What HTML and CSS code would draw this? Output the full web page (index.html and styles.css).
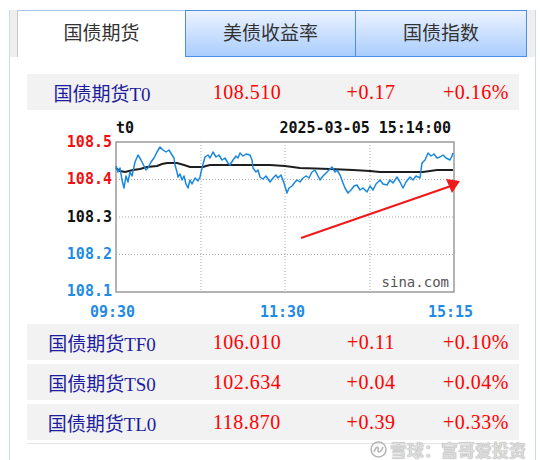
FILE: index.html
```html
<!DOCTYPE html>
<html lang="zh-CN">
<head>
  <meta charset="UTF-8">
  <title>国债期货</title>
  <link rel="stylesheet" href="styles.css">
</head>
<body>
  <div class="panel">
    <div class="tabs">
      <div class="tab-edge"></div>
      <div class="tab active">国债期货</div>
      <div class="tab">美债收益率</div>
      <div class="tab last">国债指数</div>
      <div class="tab-edge right"></div>
    </div>

    <div class="content">
      <div class="row">
        <span class="name">国债期货T0</span>
        <span class="price">108.510</span>
        <span class="chg">+0.17</span>
        <span class="pct">+0.16%</span>
      </div>

      <div class="chart">
        <svg width="492" height="214" viewBox="27 110 492 214">
          <!-- grid -->
          <g class="grid">
            <line x1="116" y1="179.5" x2="454" y2="179.5"/>
            <line x1="116" y1="217" x2="454" y2="217"/>
            <line x1="116" y1="254.5" x2="454" y2="254.5"/>
            <line x1="201" y1="142" x2="201" y2="292"/>
            <line x1="285" y1="142" x2="285" y2="292"/>
            <line x1="370" y1="142" x2="370" y2="292"/>
          </g>
          <rect class="frame" x="116" y="142" width="338" height="150"/>

          <!-- average -->
          <polyline class="avg" points="116,168 120,171 125,172 129,171 133,170 140,169 147,167 157,166 162,164 167,163 177,163 184,165 190,167 203,167 206,166 210,165 240,165 270,165 285,166 300,168 330,169 353,170 370,171 380,172 400,172 423,172 430,171 437,170 453,170"/>

          <!-- price -->
          <polyline class="px" points="116,166 118,172 120,168 122,180 124,188 126,176 128,182 130,172 132,176 135,162 138,155 141,160 143,164 146,170 148,168 151,162 154,158 157,152 160,147 163,150 166,152 169,150 172,155 174,158 175,165 177,172 178,177 180,174 182,180 184,176 186,184 188,188 190,180 192,184 195,178 198,181 200,177 202,168 205,157 208,155 210,158 213,152 216,157 219,155 222,160 225,158 228,163 230,165 233,160 236,156 238,158 240,153 243,156 246,154 250,155 252,160 253,168 256,172 258,170 260,177 263,179 266,176 270,182 273,178 276,175 278,178 281,175 284,183 287,193 289,188 292,186 295,182 297,180 300,182 303,178 306,176 309,178 312,172 315,170 318,176 320,180 323,176 326,173 329,170 332,167 335,172 337,170 340,175 343,183 345,188 348,193 351,190 354,186 357,185 360,190 363,188 367,192 370,186 373,190 376,184 380,180 383,184 387,185 390,180 393,183 397,177 400,182 403,188 406,182 410,177 413,180 416,176 420,178 422,163 425,160 428,153 431,156 434,154 437,158 440,157 443,155 446,158 450,160 452,156 453,153"/>

          <!-- labels -->
          <text class="lbl" x="116" y="133">t0</text>
          <text class="lbl" x="451" y="133" text-anchor="end">2025-03-05 15:14:00</text>
          <text class="lbl up" x="112" y="147" text-anchor="end">108.5</text>
          <text class="lbl up" x="112" y="184" text-anchor="end">108.4</text>
          <text class="lbl" x="112" y="222" text-anchor="end">108.3</text>
          <text class="lbl down" x="112" y="259" text-anchor="end">108.2</text>
          <text class="lbl down" x="112" y="296" text-anchor="end">108.1</text>
          <text class="lbl down" x="90" y="317">09:30</text>
          <text class="lbl down" x="260" y="317">11:30</text>
          <text class="lbl down" x="428" y="317">15:15</text>
          <text class="brand" x="449" y="287" text-anchor="end">sina.com</text>

          <!-- arrow -->
          <line class="arrow" x1="301" y1="238" x2="451" y2="186"/>
          <polygon class="arrow-head" points="446,179 460,181 452,193"/>
        </svg>
      </div>

      <div class="row">
        <span class="name">国债期货TF0</span>
        <span class="price">106.010</span>
        <span class="chg">+0.11</span>
        <span class="pct">+0.10%</span>
      </div>
      <div class="row">
        <span class="name">国债期货TS0</span>
        <span class="price">102.634</span>
        <span class="chg">+0.04</span>
        <span class="pct">+0.04%</span>
      </div>
      <div class="row">
        <span class="name">国债期货TL0</span>
        <span class="price">118.870</span>
        <span class="chg">+0.39</span>
        <span class="pct">+0.33%</span>
      </div>
      <div class="rule"></div>
    </div>

    <div class="watermark">
      <svg width="17" height="17" viewBox="0 0 17 17">
        <circle cx="8.5" cy="8.5" r="7.5"/>
        <path d="M4 11 C6 5, 9 5, 8 9 C7 12, 11 12, 13 6"/>
      </svg>
      <span>雪球：富哥爱投资</span>
    </div>
  </div>
</body>
</html>
```

FILE: styles.css
```css
body {
  margin: 0;
  background: #fff;
  font-family: "Liberation Serif", "Noto Sans CJK SC", serif;
}

.panel {
  position: relative;
  box-sizing: border-box;
  width: 527px;
  height: 450px;
  margin: 10px 0 0 9px;
  border-left: 1px solid #c9d9ef;
  border-right: 1px solid #c9d9ef;
}

/* tabs */
.tabs {
  display: flex;
  height: 47px;
}
.tab-edge {
  width: 7px;
  background: #efefef;
  border-right: 1px solid #c8c8c8;
}
.tab-edge.right {
  width: 8px;
  border-right: none;
}
.tab {
  box-sizing: border-box;
  width: 170px;
  border: 1px solid #4b8fe6;
  border-right: none;
  background: linear-gradient(#ecf3ff, #aacdfd);
  color: #333;
  font-size: 19px;
  line-height: 45px;
  text-align: center;
}
.tab.active {
  width: 167px;
  border: none;
  border-top: 1px solid #a9c6ea;
  background: #fff;
}
.tab.last {
  width: 172px;
  border-right: 1px solid #4b8fe6;
}

/* quote rows */
.content {
  padding: 17px 16px 0 17px;
}
.row {
  display: grid;
  grid-template-columns: 150px 140px 108px 94px;
  align-items: center;
  height: 36px;
  background: #f2f2f2;
}
.row + .row {
  margin-top: 4px;
}
.name {
  text-align: center;
  color: #1c1c9e;
  font-size: 19px;
}
.price, .chg, .pct {
  color: #ff0000;
  font-size: 20px;
  letter-spacing: 0.5px;
}
.price, .chg {
  text-align: center;
}
.pct {
  text-align: right;
  padding-right: 10px;
}
.rule {
  height: 1px;
  margin-top: 3px;
  background: #e6e6e6;
}

/* chart */
.chart svg {
  display: block;
}
.grid line {
  stroke: #aaa;
  stroke-width: 1;
  stroke-dasharray: 1 2;
}
.frame {
  fill: none;
  stroke: #9a9a9a;
  stroke-width: 1.5;
}
.avg {
  fill: none;
  stroke: #1e1e1e;
  stroke-width: 2;
}
.px {
  fill: none;
  stroke: #1a87df;
  stroke-width: 1.5;
  stroke-linejoin: round;
}
.lbl {
  font-family: "DejaVu Sans Mono", monospace;
  font-size: 15px;
  font-weight: bold;
  fill: #111;
}
.lbl.up {
  fill: #f01010;
}
.lbl.down {
  fill: #1f8be4;
}
.brand {
  font-family: "DejaVu Sans Mono", monospace;
  font-size: 14px;
  fill: #555;
}
.arrow {
  stroke: #f01818;
  stroke-width: 2;
}
.arrow-head {
  fill: #f01818;
}

/* watermark */
.watermark {
  position: absolute;
  left: 360px;
  top: 431px;
  display: flex;
  align-items: center;
  gap: 3px;
  color: #dcdcdc;
  font-family: "Noto Sans CJK SC", sans-serif;
  font-size: 17px;
  line-height: 17px;
  font-weight: bold;
  text-shadow: 0 0 1px #8a8a8a;
}
.watermark svg {
  fill: none;
  stroke: #b5b5b5;
  stroke-width: 1.5;
}
```
